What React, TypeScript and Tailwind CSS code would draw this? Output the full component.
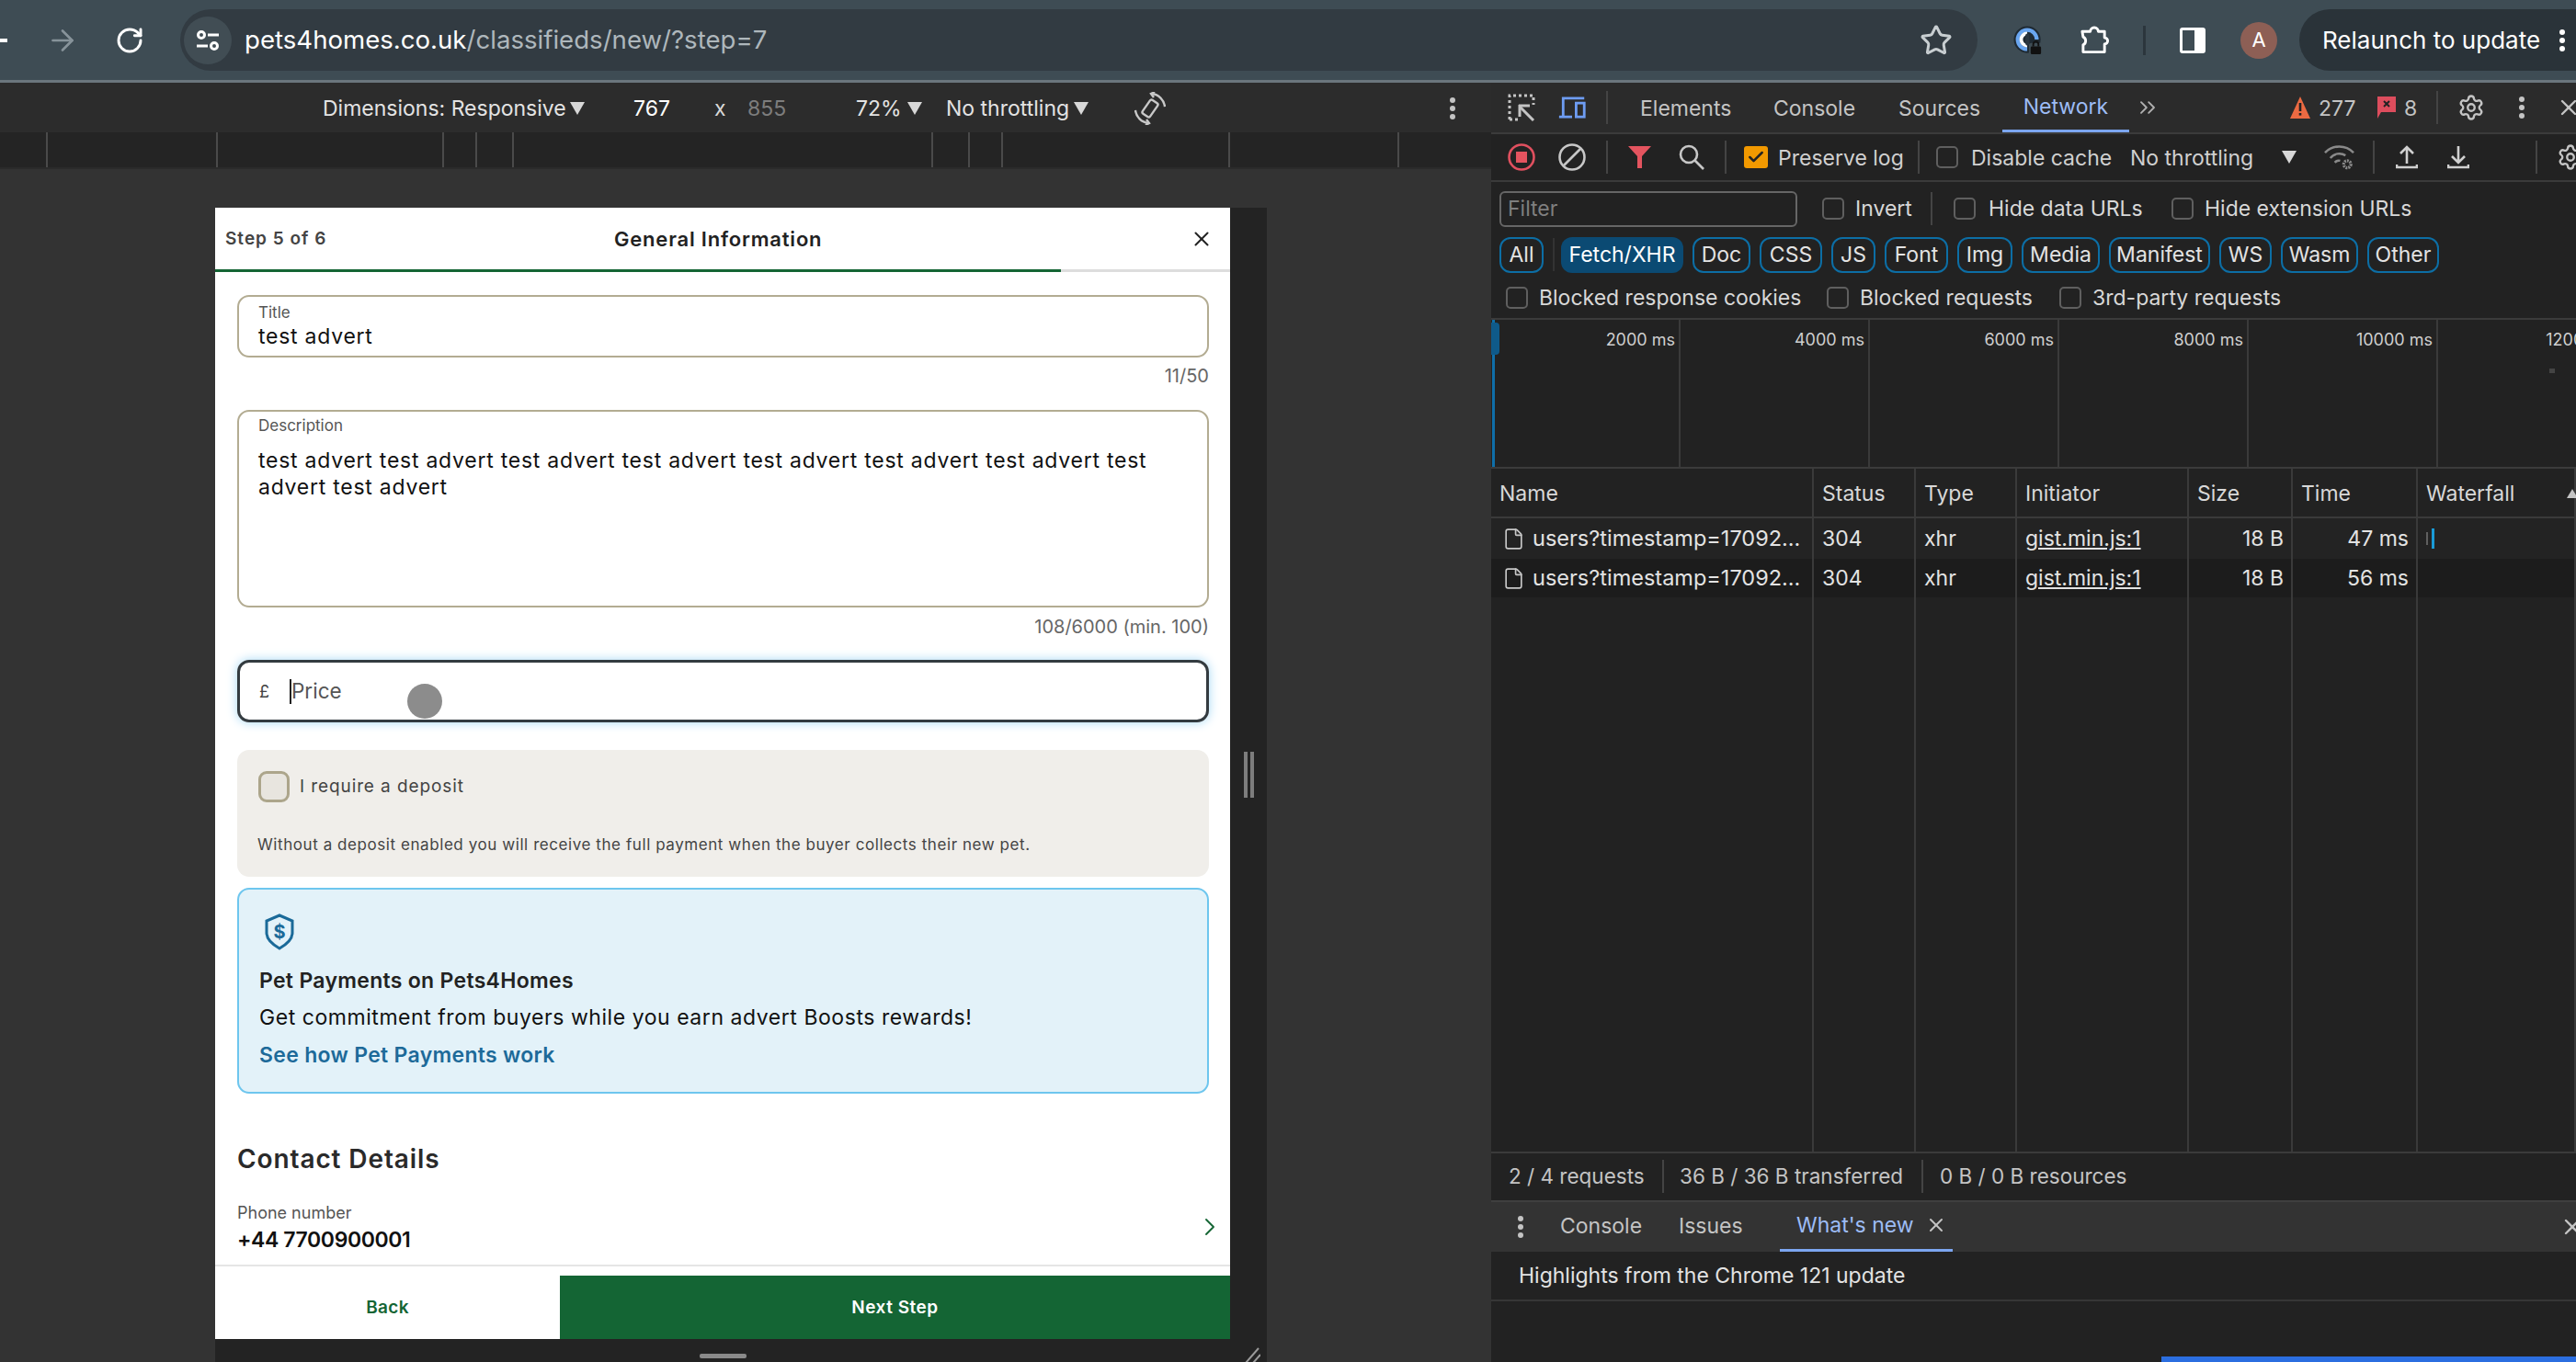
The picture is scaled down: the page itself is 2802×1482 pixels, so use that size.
import { ArrowRight, RotateCw, Star, X, ChevronRight, File, Settings, Check, ChevronsRight } from 'lucide-react';

const chips = [
    { label: 'Doc', w: 'w-[63px]' },
    { label: 'CSS', w: 'w-[68px]' },
    { label: 'JS', w: 'w-[48px]' },
    { label: 'Font', w: 'w-[69px]' },
    { label: 'Img', w: 'w-[60px]' },
    { label: 'Media', w: 'w-[85px]' },
    { label: 'Manifest', w: 'w-[110px]' },
    { label: 'WS', w: 'w-[57px]' },
    { label: 'Wasm', w: 'w-[84px]' },
    { label: 'Other', w: 'w-[78px]' },
];

const rulerTicks = ['ml-[50px]', 'ml-[183px]', 'ml-[244px]', 'ml-[34px]', 'ml-[38px]', 'ml-[454px]', 'ml-[38px]', 'ml-[34px]', 'ml-[245px]', 'ml-[182px]'];

const timeline = ['2000 ms', '4000 ms', '6000 ms', '8000 ms', '10000 ms', '12000 ms'];

const header = ['Name', 'Status', 'Type', 'Initiator', 'Size', 'Time', 'Waterfall'];

function Sep() {
    return <div className="w-[2px] h-[36px] bg-[#444444] shrink-0"></div>;
}

function Box({ className = '' }: { className?: string }) {
    return <div className={`w-[24px] h-[24px] rounded-[5px] border-2 border-[#5f5f5f] shrink-0 ${className}`}></div>;
}

function Dots({ className = 'text-[#c4c4c4]' }: { className?: string }) {
    return (
        <div className={`flex flex-col gap-[3px] items-center w-[12px] shrink-0 ${className}`}>
            <div className="w-[6px] h-[6px] rounded-full bg-current"></div>
            <div className="w-[6px] h-[6px] rounded-full bg-current"></div>
            <div className="w-[6px] h-[6px] rounded-full bg-current"></div>
        </div>
    );
}

function Tri({ className = '' }: { className?: string }) {
    return (
        <svg viewBox="0 0 16 14" className={`w-[16px] h-[14px] shrink-0 ${className}`}>
            <polygon points="0,0 16,0 8,14" fill="#d8d8d8" />
        </svg>
    );
}

function BrowserBar() {
    return (
        <div className="h-[90px] bg-[#3e4c54] border-b-[3px] border-[#6b767d] flex items-center shrink-0 overflow-hidden">
            <div className="w-[8px] h-[4px] bg-white shrink-0"></div>
            <ArrowRight className="ml-[42px] w-[36px] h-[36px] text-[#87939a] shrink-0" strokeWidth={1.8} />
            <RotateCw className="ml-[39px] w-[32px] h-[32px] text-white shrink-0" strokeWidth={2.2} />
            <div className="ml-[39px] w-[1955px] h-[67px] rounded-full bg-[#323b42] flex items-center shrink-0">
                <div className="w-[52px] h-[52px] ml-[4px] rounded-full bg-[#414d54] flex items-center justify-center shrink-0">
                    <svg viewBox="0 0 26 22" className="w-[26px] h-[22px]" fill="none" stroke="white" strokeWidth="3">
                        <circle cx="6" cy="5" r="3.5" />
                        <path d="M13 5 H25" />
                        <path d="M1 17 H13" />
                        <circle cx="20" cy="17" r="3.5" />
                    </svg>
                </div>
                <div className="ml-[14px] text-[27.6px] font-['Inter',sans-serif] whitespace-nowrap">
                    <span className="text-white">pets4homes.co.uk</span>
                    <span className="text-[#aeb7bc]">/classifieds/new/?step=7</span>
                </div>
                <Star className="ml-auto mr-[27px] w-[36px] h-[36px] text-[#c8ced1] shrink-0" strokeWidth={2} />
            </div>
            <svg viewBox="0 0 34 34" className="ml-[39px] w-[32px] h-[34px] shrink-0" fill="none">
                <circle cx="16" cy="16" r="15.5" fill="#1f2a33" />
                <path d="M16 27 A11 11 0 1 1 27 16" stroke="#6aa6f0" strokeWidth="4.5" />
                <path d="M16 9 A7 7 0 0 0 16 23" stroke="white" strokeWidth="4" />
                <rect x="14" y="9" width="4.5" height="14" rx="2.2" fill="#2a3640" />
                <rect x="18" y="20" width="16" height="14" rx="3" fill="#3e4c54" />
                <rect x="20" y="24" width="12" height="9" rx="1.5" fill="#111111" />
                <path d="M23 24 V21.5 a3 3 0 0 1 6 0 V24" stroke="#111111" strokeWidth="2" />
            </svg>
            <svg viewBox="0 0 34 32" className="ml-[40px] w-[33px] h-[32px] shrink-0" fill="none" stroke="white" strokeWidth="3" strokeLinejoin="round">
                <path d="M3 6 H12 a4.5 4.5 0 0 1 9 0 H28 V13 a3.5 3.5 0 0 1 0 7 V29 H4 V21 a5 5 0 0 0 0 -9 Z" />
            </svg>
            <div className="ml-[36px] w-[3px] h-[32px] bg-[#2c363d] shrink-0"></div>
            <div className="ml-[37px] w-[28px] h-[28px] rounded-[3px] border-[3px] border-white flex justify-end shrink-0">
                <div className="w-[9px] h-full bg-white"></div>
            </div>
            <div className="ml-[38px] w-[40px] h-[40px] rounded-full bg-[#8d5f55] flex items-center justify-center text-white text-[22px] font-['Inter',sans-serif] shrink-0">A</div>
            <div className="ml-[24px] flex-1 h-[67px] rounded-l-full bg-[#2a3339] flex items-center pl-[25px] shrink-0 min-w-0">
                <span className="text-white text-[26px] font-['Inter',sans-serif] whitespace-nowrap w-[236px]">Relaunch to update</span>
                <Dots className="ml-[19px] text-white" />
            </div>
        </div>
    );
}

function DeviceToolbar() {
    return (
        <>
            <div className="h-[54px] bg-[#2c2c2c] flex items-center pt-[2px] text-[23px] text-[#e3e3e3] whitespace-nowrap shrink-0">
                <span className="ml-[351px] w-[264px]">Dimensions: Responsive</span>
                <Tri className="ml-[5px]" />
                <span className="ml-[53px] w-[40px] text-white">767</span>
                <span className="ml-[48px] w-[18px] text-[#d8d8d8]">x</span>
                <span className="ml-[18px] w-[40px] text-[#7d7d7d]">855</span>
                <span className="ml-[78px] w-[48px]">72%</span>
                <Tri className="ml-[8px]" />
                <span className="ml-[26px] w-[132px]">No throttling</span>
                <Tri className="ml-[7px]" />
                <svg viewBox="0 0 34 36" className="ml-[50px] w-[34px] h-[36px] shrink-0" fill="none" stroke="#c8c8c8" strokeWidth="2.4">
                    <rect x="12" y="9" width="10" height="18" rx="2" transform="rotate(35 17 18)" />
                    <path d="M19 2 A16 16 0 0 1 33 16" />
                    <path d="M15 34 A16 16 0 0 1 1 20" />
                    <path d="M22 0 L18 2 L21 6" />
                    <path d="M12 36 L16 34 L13 30" />
                </svg>
                <Dots className="ml-[306px] text-[#c4c4c4]" />
            </div>
            <div className="h-[40px] bg-[#242424] border-b-2 border-[#2b2b2b] flex shrink-0">
                {rulerTicks.map((ml, i) => (
                    <div key={i} className={`w-[2px] h-full bg-[#4a4a4a] ${ml}`}></div>
                ))}
            </div>
        </>
    );
}

function Phone() {
    return (
        <div className="w-[1104px] h-[1231px] bg-white flex flex-col shrink-0 font-['Inter',sans-serif] relative">
            <div className="h-[67px] flex items-center pt-[1px] shrink-0">
                <div className="w-[434px] pl-[11px] text-[19px] tracking-[1px] font-semibold text-[#444444]">Step 5 of 6</div>
                <div className="text-[22px] tracking-[0.8px] font-semibold text-[#222222]">General Information</div>
                <X className="ml-auto mr-[18px] w-[26px] h-[26px] text-[#222222]" strokeWidth={1.8} />
            </div>
            <div className="h-[3px] bg-[#dddddd] shrink-0">
                <div className="w-[920px] h-full bg-[#146534]"></div>
            </div>

            <div className="flex-1 pl-[24px] pr-[23px] flex flex-col">
                <div className="mt-[25px] h-[68px] rounded-[13px] border-2 border-[#b3ac92] pl-[21px] shrink-0">
                    <div className="mt-[7px] text-[17px] leading-[20px] text-[#555555]">Title</div>
                    <div className="text-[23px] tracking-[0.75px] leading-[32px] text-[#111111]">test advert</div>
                </div>
                <div className="h-[40px] flex items-center justify-end text-[20px] text-[#666666] shrink-0">11/50</div>

                <div className="mt-[17px] h-[215px] rounded-[13px] border-2 border-[#b3ac92] pl-[21px] shrink-0">
                    <div className="mt-[5px] text-[17px] leading-[20px] text-[#555555]">Description</div>
                    <div className="mt-[14px] w-[990px] text-[23px] tracking-[0.75px] leading-[29px] text-[#111111]">test advert test advert test advert test advert test advert test advert test advert test advert test advert</div>
                </div>
                <div className="h-[42px] mb-[2px] flex items-center justify-end text-[20px] text-[#666666] shrink-0">108/6000 (min. 100)</div>

                <div className="mt-[13px] h-[68px] rounded-[13px] border-[3px] border-[#333b40] shadow-[0_0_12px_#a5d8f5] flex items-center pl-[21px] shrink-0">
                    <span className="w-[33px] text-[18px] text-[#444444]">£</span>
                    <div className="w-[2px] h-[27px] bg-[#222222]"></div>
                    <span className="text-[22.5px] text-[#555555]">Price</span>
                </div>

                <div className="mt-[30px] h-[138px] rounded-[13px] bg-[#f0eeea] pl-[23px] pt-[23px] shrink-0">
                    <div className="flex items-center h-[34px]">
                        <div className="w-[34px] h-[34px] rounded-[9px] border-[3px] border-[#aca58b] bg-[#e8e5df] shrink-0"></div>
                        <span className="ml-[11px] text-[19px] tracking-[0.9px] text-[#444444]">I require a deposit</span>
                    </div>
                    <div className="mt-[34px] -ml-[1px] text-[17px] tracking-[0.57px] leading-[24px] text-[#444444]">Without a deposit enabled you will receive the full payment when the buyer collects their new pet.</div>
                </div>

                <div className="mt-[12px] h-[224px] rounded-[13px] border-2 border-[#6ec6ee] bg-[#e3f2f9] pl-[22px] pt-[26px] shrink-0">
                    <svg viewBox="0 0 34 40" className="ml-[5px] w-[34px] h-[40px]" fill="none" stroke="#1a6a99" strokeWidth="3">
                        <path d="M17 2 L31 8 V21 C31 29 24 34 17 38 C10 34 3 29 3 21 V8 Z" />
                        <text x="17" y="27" textAnchor="middle" fontSize="20" fontWeight="700" fill="#1a6a99" stroke="none">$</text>
                    </svg>
                    <div className="mt-[17px] text-[23px] tracking-[0.3px] leading-[32px] font-semibold text-[#222222]">Pet Payments on Pets4Homes</div>
                    <div className="mt-[8px] text-[23px] tracking-[0.55px] leading-[32px] text-[#111111]">Get commitment from buyers while you earn advert Boosts rewards!</div>
                    <div className="mt-[9px] text-[23px] tracking-[0.3px] leading-[32px] font-semibold text-[#1d6a99]">See how Pet Payments work</div>
                </div>

                <div className="mt-[54px] text-[28px] tracking-[0.9px] leading-[34px] font-semibold text-[#2a2a2a] shrink-0">Contact Details</div>
                <div className="mt-[28px] flex items-center justify-between shrink-0">
                    <div>
                        <div className="text-[18px] leading-[28px] text-[#555555]">Phone number</div>
                        <div className="text-[23px] tracking-[-0.4px] leading-[30px] font-semibold text-[#111111]">+44 7700900001</div>
                    </div>
                    <ChevronRight className="-mr-[17px] w-[32px] h-[32px] text-[#146534]" strokeWidth={1.4} />
                </div>
            </div>

            <div className="h-[2px] bg-[#e5e5e5] shrink-0"></div>
            <div className="h-[10px] shrink-0"></div>
            <div className="h-[69px] flex shrink-0">
                <div className="w-[375px] flex items-center justify-center pt-[1px] text-[19px] tracking-[0.3px] font-semibold text-[#146534]">Back</div>
                <div className="flex-1 bg-[#146534] flex items-center justify-center pt-[1px] text-[19px] tracking-[0.5px] font-semibold text-white">Next Step</div>
            </div>

            {/* recorded mouse pointer */}
            <div className="absolute left-[209px] top-[518px] w-[38px] h-[38px] rounded-full bg-[#8c8c8c]"></div>
        </div>
    );
}

function LeftPane() {
    return (
        <div className="w-[1622px] h-full flex flex-col shrink-0 font-['Inter',sans-serif]">
            <DeviceToolbar />
            <div className="flex-1 bg-[#333333] pt-[42px] pl-[234px]">
                <div className="w-[1144px] bg-[#232323] flex flex-col h-full">
                    <div className="flex">
                        <Phone />
                        <div className="flex-1 flex justify-center gap-[3px] pt-[592px]">
                            <div className="w-[4px] h-[50px] bg-[#7d7d7d]"></div>
                            <div className="w-[4px] h-[50px] bg-[#7d7d7d]"></div>
                        </div>
                    </div>
                    <div className="flex">
                        <div className="w-[1104px] pt-[16px] flex justify-center">
                            <div className="w-[51px] h-[5px] rounded-[2px] bg-[#8a8a8a]"></div>
                        </div>
                        <svg viewBox="0 0 18 18" className="ml-[15px] mt-[8px] w-[18px] h-[18px]" stroke="#9a9a9a" strokeWidth="2">
                            <path d="M2 18 L16 2" />
                            <path d="M10 18 L18 9" />
                        </svg>
                    </div>
                </div>
            </div>
        </div>
    );
}

function DevToolsTabs() {
    return (
        <div className="h-[56px] bg-[#2b2b2b] border-b-2 border-[#3b3b3b] flex items-center pl-[18px] text-[23px] text-[#c4c4c4] whitespace-nowrap shrink-0 overflow-hidden">
            <svg viewBox="0 0 30 30" className="w-[30px] h-[30px] shrink-0" fill="none" stroke="#c4c4c4" strokeWidth="3">
                <path d="M2 28 V2 H28 V12" strokeDasharray="3 3" />
                <path d="M2 28 H12" strokeDasharray="3 3" />
                <path d="M13 14 L28 29" />
                <path d="M12 13 H24" />
                <path d="M13 12 V25" />
            </svg>
            <svg viewBox="0 0 34 27" className="ml-[25px] w-[30px] h-[28px] shrink-0" fill="none" stroke="#6e9cf2" strokeWidth="3.2">
                <path d="M6 25 V2 H32" />
                <path d="M1 25 H17" />
                <rect x="22" y="8" width="10" height="17" />
            </svg>
            <div className="ml-[22px]"><Sep /></div>
            <span className="ml-[35px] w-[98px] pt-[2px]">Elements</span>
            <span className="ml-[47px] w-[88px] pt-[2px]">Console</span>
            <span className="ml-[48px] w-[88px] pt-[2px]">Sources</span>
            <div className="ml-[25px] w-[138px] h-full border-b-[3px] border-[#7ca6f0] flex items-center justify-center pt-[2px] text-[#9dbcf5] shrink-0">Network</div>
            <ChevronsRight className="ml-[6px] w-[28px] h-[30px] text-[#b0b0b0] shrink-0" strokeWidth={1.6} />
            <svg viewBox="0 0 22 24" className="ml-[141px] w-[22px] h-[24px] shrink-0">
                <polygon points="11,0 22,24 0,24" fill="#ec6a42" />
                <rect x="9.7" y="7" width="2.6" height="9" fill="#222222" />
                <rect x="9.7" y="18" width="2.6" height="2.6" fill="#222222" />
            </svg>
            <span className="ml-[9px] w-[39px] pt-[2px]">277</span>
            <svg viewBox="0 0 20 24" className="ml-[25px] w-[20px] h-[24px] shrink-0">
                <path d="M0 0 H20 V17 H4 L0 24 Z" fill="#dd4d5d" />
                <path d="M7 5 L13 11 M13 5 L7 11" stroke="#222222" strokeWidth="2" />
            </svg>
            <span className="ml-[9px] w-[13px] pt-[2px]">8</span>
            <div className="ml-[22px]"><Sep /></div>
            <Settings className="ml-[21px] w-[30px] h-[30px] text-[#c4c4c4] shrink-0" strokeWidth={1.9} />
            <Dots className="ml-[34px] text-[#c4c4c4]" />
            <X className="ml-[31px] w-[28px] h-[28px] text-[#c4c4c4] shrink-0" strokeWidth={2} />
        </div>
    );
}

function NetworkToolbar() {
    return (
        <div className="h-[52px] border-b-2 border-[#3b3b3b] flex items-center pl-[18px] text-[23px] text-[#d0d0d0] whitespace-nowrap shrink-0 overflow-hidden">
            <svg viewBox="0 0 30 30" className="w-[30px] h-[30px] shrink-0">
                <circle cx="15" cy="15" r="13.5" fill="none" stroke="#e0505f" strokeWidth="2.6" />
                <rect x="9" y="9" width="12" height="12" fill="#e4545f" />
            </svg>
            <svg viewBox="0 0 30 30" className="ml-[25px] w-[30px] h-[30px] shrink-0" fill="none" stroke="#c7c7c7" strokeWidth="2.6">
                <circle cx="15" cy="15" r="13.5" />
                <path d="M6 24 L24 6" />
            </svg>
            <div className="ml-[22px]"><Sep /></div>
            <svg viewBox="0 0 25 24" className="ml-[22px] w-[25px] h-[24px] shrink-0">
                <polygon points="0,0 25,0 15,11 15,24 10,24 10,11" fill="#e4545f" />
            </svg>
            <svg viewBox="0 0 28 28" className="ml-[30px] w-[28px] h-[28px] shrink-0" fill="none" stroke="#c7c7c7" strokeWidth="2.6">
                <circle cx="11" cy="11" r="9" />
                <path d="M17 17 L27 27" />
            </svg>
            <div className="ml-[22px]"><Sep /></div>
            <div className="ml-[19px] w-[26px] h-[24px] rounded-[3px] bg-[#f29900] flex items-center justify-center shrink-0">
                <Check className="w-[20px] h-[20px] text-[#222222]" strokeWidth={3} />
            </div>
            <span className="ml-[11px] w-[133px] pt-[2px]">Preserve log</span>
            <div className="ml-[19px]"><Sep /></div>
            <Box className="ml-[18px]" />
            <span className="ml-[14px] w-[151px] pt-[2px]">Disable cache</span>
            <span className="ml-[22px] w-[132px] pt-[2px]">No throttling</span>
            <Tri className="ml-[33px]" />
            <svg viewBox="0 0 34 30" className="ml-[30px] w-[33px] h-[30px] shrink-0" fill="none" stroke="#8a8a8a" strokeWidth="2.6">
                <path d="M1 10 A22 22 0 0 1 33 10" />
                <path d="M7 16 A13 13 0 0 1 24 13" />
                <path d="M12 21 A6 6 0 0 1 18 19" />
                <circle cx="26" cy="23" r="4" strokeWidth="3.4" strokeDasharray="2 1" />
            </svg>
            <div className="ml-[20px]"><Sep /></div>
            <svg viewBox="0 0 24 26" className="ml-[23px] w-[24px] h-[26px] shrink-0" fill="none" stroke="#d0d0d0" strokeWidth="2.6">
                <path d="M12 20 V2 M5 9 L12 2 L19 9" />
                <path d="M1 21 V24 H23 V21" />
            </svg>
            <svg viewBox="0 0 24 26" className="ml-[32px] w-[24px] h-[26px] shrink-0" fill="none" stroke="#d0d0d0" strokeWidth="2.6">
                <path d="M12 1 V19 M5 12 L12 19 L19 12" />
                <path d="M1 21 V24 H23 V21" />
            </svg>
            <div className="ml-[72px]"><Sep /></div>
            <Settings className="ml-[21px] w-[30px] h-[30px] text-[#c4c4c4] shrink-0" strokeWidth={1.9} />
        </div>
    );
}

function FilterRows() {
    return (
        <div className="border-b-2 border-[#3b3b3b] text-[23px] text-[#d8d8d8] whitespace-nowrap shrink-0">
            <div className="h-[56px] flex items-center pl-[9px] pt-[2px]">
                <div className="w-[324px] h-[39px] rounded-[6px] border-2 border-[#666666] flex items-center pl-[7px] text-[#7f7f7f] shrink-0">Filter</div>
                <Box className="ml-[27px]" />
                <span className="ml-[12px] w-[60px]">Invert</span>
                <div className="ml-[22px]"><Sep /></div>
                <Box className="ml-[23px]" />
                <span className="ml-[14px] w-[169px]">Hide data URLs</span>
                <Box className="ml-[30px]" />
                <span className="ml-[12px]">Hide extension URLs</span>
            </div>
            <div className="h-[46px] flex items-center pl-[9px]">
                <div className="w-[48px] h-[39px] rounded-[12px] border-2 border-[#0c6ea5] flex items-center justify-center text-[#e3e3e3] shrink-0">All</div>
                <div className="ml-[10px] w-[2px] h-[36px] bg-[#333333] shrink-0"></div>
                <div className="ml-[7px] w-[133px] h-[39px] rounded-[12px] bg-[#0b4a73] flex items-center justify-center text-white shrink-0">Fetch/XHR</div>
                <div className="ml-[10px] flex gap-[10px]">
                    {chips.map(c => (
                        <div key={c.label} className={`h-[39px] rounded-[12px] border-2 border-[#0c6ea5] flex items-center justify-center text-[#e3e3e3] shrink-0 ${c.w}`}>{c.label}</div>
                    ))}
                </div>
            </div>
            <div className="h-[46px] flex items-center pl-[16px] pt-[2px]">
                <Box />
                <span className="ml-[12px] w-[283px]">Blocked response cookies</span>
                <Box className="ml-[30px]" />
                <span className="ml-[12px] w-[186px]">Blocked requests</span>
                <Box className="ml-[31px]" />
                <span className="ml-[12px]">3rd-party requests</span>
            </div>
        </div>
    );
}

function Timeline() {
    return (
        <div className="h-[162px] border-b-2 border-[#3b3b3b] flex shrink-0 overflow-hidden relative">
            {timeline.map(t => (
                <div key={t} className="w-[206px] h-full border-r-2 border-[#3a3a3a] pr-[4px] pt-[10px] text-right text-[18px] leading-[24px] text-[#cfcfcf] whitespace-nowrap shrink-0">{t}</div>
            ))}
            {/* overview selection handle */}
            <div className="absolute left-[1px] top-0 w-[3px] h-full bg-[#0f6ea8]"></div>
            <div className="absolute left-0 top-[3px] w-[9px] h-[35px] rounded-r-[4px] bg-[#0f5a8a]"></div>
            {/* request marks in the overview */}
            <div className="absolute left-[1151px] top-[53px] w-[6px] h-[5px] bg-[#444444]"></div>
        </div>
    );
}

function RequestTable() {
    const cell = 'border-r-2 border-[#3a3a3a] flex items-center pl-[9px] min-w-0 whitespace-nowrap';
    const rows = [
        { time: '47 ms', bg: 'bg-[#232323]', bar: true },
        { time: '56 ms', bg: 'bg-[#1c1c1c]', bar: false },
    ];
    return (
        <div className="flex-1 min-h-0 grid grid-cols-[351px_111px_110px_187px_113px_136px_172px] grid-rows-[54px_44px_42px_1fr] text-[23px] text-[#e3e3e3]">
            {header.map((h, i) => (
                <div key={h} className={`${cell} border-b-2 pt-[2px] text-[#d8d8d8] ${i === 6 ? 'justify-between pr-0' : ''}`}>
                    {h}
                    {i === 6 && (
                        <svg viewBox="0 0 12 10" className="w-[12px] h-[10px] shrink-0 -mr-[4px]"><polygon points="6,0 12,10 0,10" fill="#c4c4c4" /></svg>
                    )}
                </div>
            ))}
            {rows.map(r => (
                <div key={r.time} className="contents">
                    <div className={`${cell} ${r.bg} !pl-[12px] gap-[8px]`}>
                        <File className="w-[25px] h-[25px] text-[#c7c7c7] shrink-0" strokeWidth={1.6} />
                        <span className="text-[23.5px]">users?timestamp=17092...</span>
                    </div>
                    <div className={`${cell} ${r.bg}`}>304</div>
                    <div className={`${cell} ${r.bg}`}>xhr</div>
                    <div className={`${cell} ${r.bg} underline`}>gist.min.js:1</div>
                    <div className={`${cell} ${r.bg} justify-end pr-[8px]`}>18 B</div>
                    <div className={`${cell} ${r.bg} justify-end pr-[8px]`}>{r.time}</div>
                    <div className={`${cell} ${r.bg} gap-[4px] border-r-0`}>
                        {r.bar && (
                            <>
                                <div className="w-[2px] h-[14px] bg-[#5f5f5f]"></div>
                                <div className="w-[3px] h-[22px] bg-[#1a9bd7]"></div>
                            </>
                        )}
                    </div>
                </div>
            ))}
            {header.map(h => (
                <div key={h} className="border-r-2 border-[#3a3a3a]"></div>
            ))}
        </div>
    );
}

function RightPane() {
    return (
        <div className="flex-1 min-w-0 h-full bg-[#222222] flex flex-col font-['Inter',sans-serif] relative overflow-hidden">
            <DevToolsTabs />
            <NetworkToolbar />
            <FilterRows />
            <Timeline />
            <RequestTable />
            <div className="h-[53px] border-t-2 border-[#3b3b3b] flex items-center pl-[19px] pb-[1px] text-[22.5px] text-[#c4c4c4] whitespace-nowrap shrink-0">
                <span className="w-[148px]">2 / 4 requests</span>
                <div className="ml-[19px]"><Sep /></div>
                <span className="ml-[17px] w-[244px]">36 B / 36 B transferred</span>
                <div className="ml-[19px]"><Sep /></div>
                <span className="ml-[18px]">0 B / 0 B resources</span>
            </div>
            <div className="h-[56px] bg-[#333333] border-t-2 border-[#3f3f3f] flex items-center pl-[26px] text-[23px] text-[#c4c4c4] whitespace-nowrap shrink-0">
                <Dots className="text-[#c4c4c4]" />
                <span className="ml-[37px] w-[89px] pb-[1px]">Console</span>
                <span className="ml-[40px] w-[67px] pb-[1px]">Issues</span>
                <div className="ml-[43px] w-[188px] h-full border-b-[3px] border-[#7ca6f0] flex items-center pl-[18px] pb-[1px] shrink-0">
                    <span className="w-[127px] text-[#9dbcf5]">What's new</span>
                    <X className="ml-[13px] w-[24px] h-[24px]" strokeWidth={2} />
                </div>
                <X className="ml-auto -mr-[10px] w-[28px] h-[28px]" strokeWidth={2} />
            </div>
            <div className="h-[54px] border-b-2 border-[#363636] flex items-center pl-[30px] pt-[1px] text-[23px] text-[#e3e3e3] whitespace-nowrap shrink-0">Highlights from the Chrome 121 update</div>
            <div className="h-[66px] shrink-0"></div>
            {/* download progress bar of the browser, over the panel */}
            <div className="absolute left-[729px] bottom-0 right-0 h-[6px] bg-[#2b6ee0]"></div>
        </div>
    );
}

export default function App() {
    return (
        <div className="w-[2802px] h-[1482px] flex flex-col overflow-hidden bg-[#222222]">
            <BrowserBar />
            <div className="flex-1 min-h-0 flex">
                <LeftPane />
                <RightPane />
            </div>
        </div>
    );
}
